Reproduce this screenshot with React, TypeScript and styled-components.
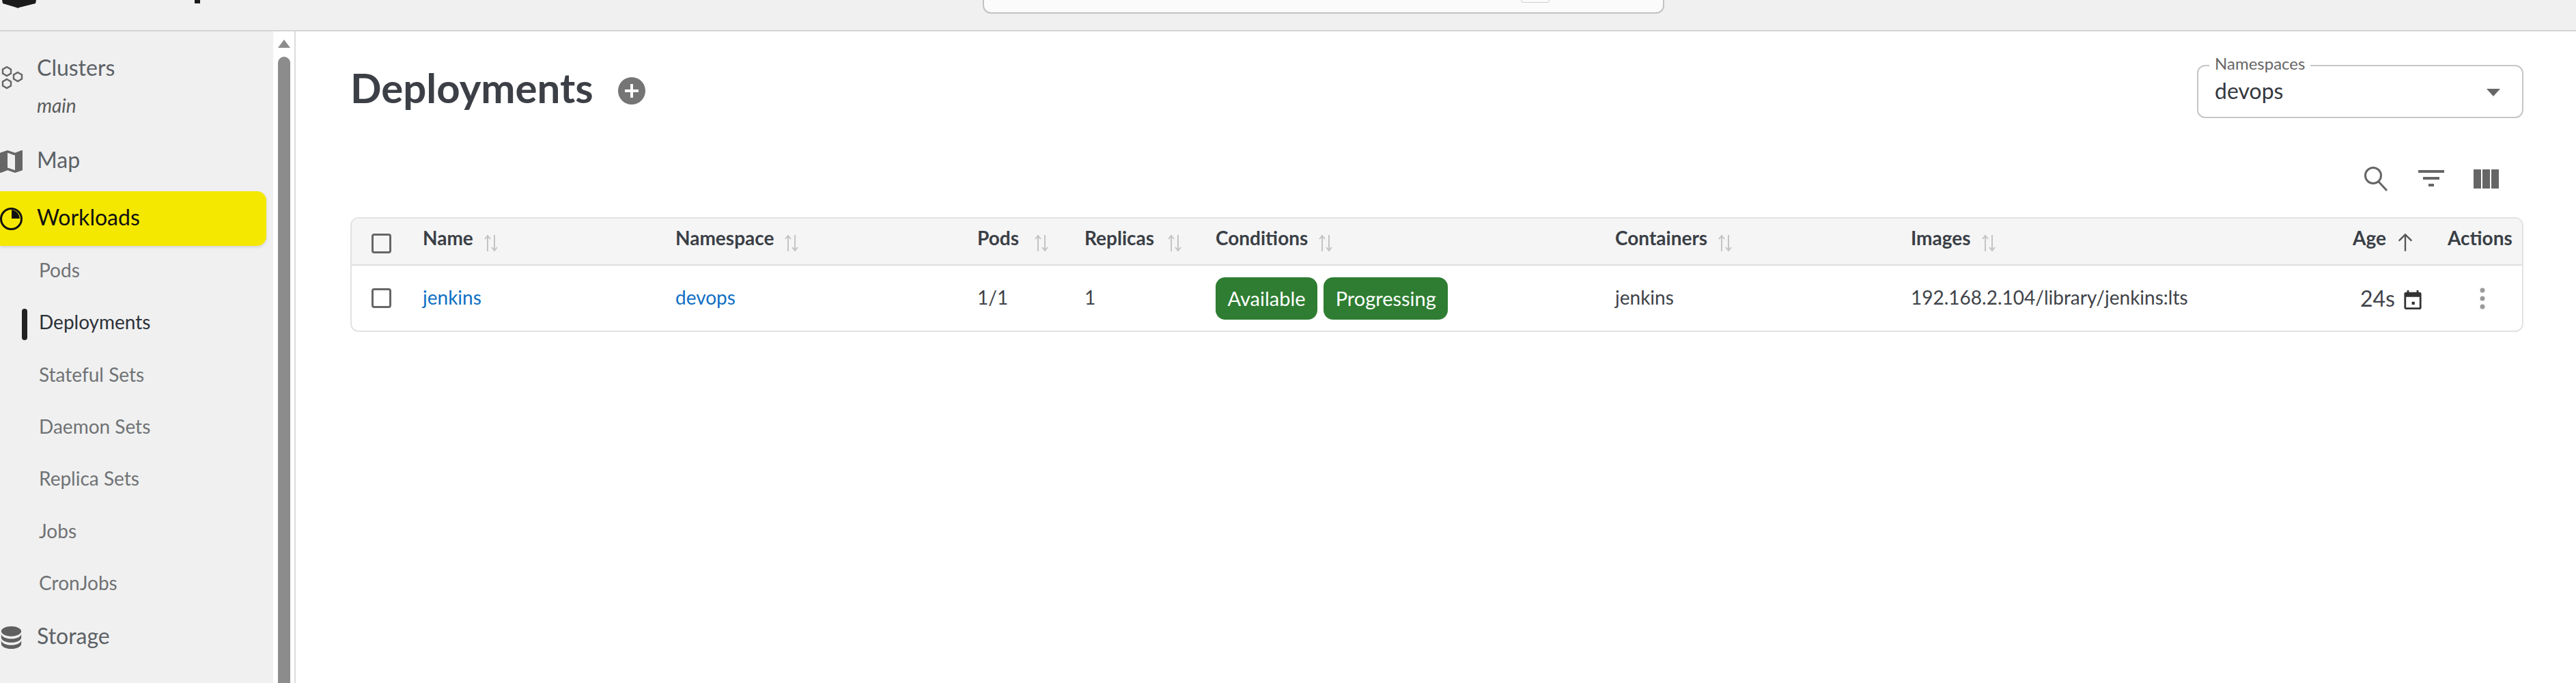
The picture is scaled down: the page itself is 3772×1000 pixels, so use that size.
import React from "react";
import styled, { createGlobalStyle } from "styled-components";

const GlobalStyle = createGlobalStyle`
  html, body {
    margin: 0;
    padding: 0;
    background: #fff;
  }
  body {
    font-family: "Lato", "Liberation Sans", sans-serif;
    overflow: hidden;
  }
`;

const Page = styled.div`
  width: 3772px;
  height: 1000px;
  display: flex;
  flex-direction: column;
  overflow: hidden;
`;

const TopBar = styled.header`
  height: 46px;
  flex: none;
  background: #f0f0f0;
  border-bottom: 2px solid #d4d4d4;
  box-sizing: border-box;
  display: flex;
  position: relative;
`;

const LogoClip = styled.svg`
  width: 320px;
  height: 16px;
  margin-right: 1119px;
  flex: none;
`;

const SearchBox = styled.div`
  width: 998px;
  height: 20px;
  box-sizing: border-box;
  background: #fbfbfb;
  border: 2px solid #c2c2c2;
  border-top: none;
  border-radius: 0 0 12px 12px;
  display: flex;
  justify-content: flex-end;
  padding-right: 166px;
`;

const KeyHint = styled.div`
  width: 42px;
  height: 4px;
  box-sizing: border-box;
  border: 1px solid #cfcfcf;
  border-top: none;
  border-radius: 0 0 4px 4px;
`;

const Body = styled.div`
  flex: 1;
  display: flex;
  min-height: 0;
`;

const Sidebar = styled.aside`
  width: 400px;
  flex: none;
  background: #f0f0f0;
  overflow: hidden;
`;

const ScrollTrack = styled.div`
  width: 33px;
  flex: none;
  box-sizing: border-box;
  background: #fff;
  border-right: 2px solid #dcdcdc;
  padding: 12px 7px 0 7px;
  display: flex;
  flex-direction: column;
  gap: 13px;
`;

const ScrollArrow = styled.div`
  width: 0;
  height: 0;
  border-left: 9px solid transparent;
  border-right: 9px solid transparent;
  border-bottom: 12px solid #8c8c8c;
`;

const ScrollThumb = styled.div`
  flex: 1;
  width: 18px;
  background: #8c8c8c;
  border-radius: 9px 9px 0 0;
`;

const ClusterItem = styled.div`
  height: 130px;
  margin-top: 14px;
  padding: 19px 0 0 54px;
  box-sizing: border-box;
  margin-bottom: 5px;
  position: relative;
`;

const ClusterName = styled.div`
  font-size: 32px;
  line-height: 40px;
  color: #5c6166;
`;

const ClusterSub = styled.div`
  font-size: 28px;
  line-height: 34px;
  margin-top: 18px;
  font-style: italic;
  color: #5c5c5c;
`;

const NavItem = styled.div<{ $active?: boolean }>`
  height: 80px;
  width: 390px;
  box-sizing: border-box;
  display: flex;
  align-items: center;
  gap: 21px;
  margin-bottom: 5px;
  font-size: 32px;
  padding-bottom: ${({ $active }) => ($active ? "6px" : "4px")};
  color: ${({ $active }) => ($active ? "#111" : "#5c6166")};
  background: ${({ $active }) => ($active ? "#f5e800" : "transparent")};
  border-radius: ${({ $active }) => ($active ? "0 14px 14px 0" : "0")};
  box-shadow: ${({ $active }) =>
    $active ? "0 2px 4px rgba(0,0,0,0.12)" : "none"};
`;

const NavIcon = styled.svg`
  width: 33px;
  height: 33px;
  flex: none;
  position: relative;
  top: 3px;
`;

const ClusterIcon = styled(NavIcon)`
  position: absolute;
  left: 0;
  top: 37px;
  width: 34px;
  height: 34px;
`;

const SubList = styled.div`
  height: 532px;
  margin-top: -5px;
`;

const SubItem = styled.div<{ $active?: boolean }>`
  height: 76.33px;
  box-sizing: border-box;
  padding-bottom: 6px;
  display: flex;
  align-items: center;
  position: relative;
  padding-left: 57px;
  font-size: 28px;
  color: ${({ $active }) => ($active ? "#2c3138" : "#6f7275")};
`;

const ActiveMark = styled.span`
  position: absolute;
  left: 32px;
  top: 16px;
  width: 8px;
  height: 46px;
  border-radius: 4px;
  background: #222;
`;

const Main = styled.main`
  flex: 1;
  min-width: 0;
  padding: 49px 77px 0 80px;
`;

const TitleRow = styled.div`
  display: flex;
  justify-content: space-between;
  align-items: flex-start;
`;

const TitleGroup = styled.div`
  display: flex;
  align-items: center;
  gap: 32px;
  height: 66px;
`;

const Title = styled.h1`
  margin: 0;
  font-size: 60px;
  line-height: 66px;
  font-weight: 700;
  color: #3c4046;
`;

const AddIcon = styled.svg`
  width: 48px;
  height: 48px;
  position: relative;
  top: 5px;
`;

const SelectBox = styled.div`
  width: 478px;
  height: 78px;
  box-sizing: border-box;
  border: 2px solid #c6c6c6;
  border-radius: 12px;
  position: relative;
  padding: 0 32px 4px 24px;
  display: flex;
  align-items: center;
  justify-content: space-between;
  font-size: 32px;
  color: #34383e;
`;

const SelectLabel = styled.span`
  position: absolute;
  left: 16px;
  top: -18px;
  padding: 0 8px;
  background: #fff;
  font-size: 24px;
  line-height: 28px;
  color: #666;
`;

const SelectArrow = styled.span`
  width: 0;
  height: 0;
  border-left: 10px solid transparent;
  border-right: 10px solid transparent;
  border-top: 11px solid #666;
  margin-top: 6px;
`;

const Toolbar = styled.div`
  display: flex;
  justify-content: flex-end;
  align-items: center;
  height: 46px;
  margin: 66px 0 33px;
  padding-right: 34px;
  gap: 41px;
`;

const ToolIcon = styled.svg`
  width: 40px;
  height: 40px;
  flex: none;
`;

const Table = styled.div`
  border: 2px solid #e2e2e2;
  border-radius: 12px;
  overflow: hidden;
`;

const columns = "104px 370px 442px 157px 192px 585px 433px 647px 139px 1fr";

const HeadRow = styled.div`
  display: grid;
  grid-template-columns: ${columns};
  height: 69px;
  background: #f5f5f5;
  border-bottom: 2px solid #dedede;
  box-sizing: border-box;
  align-items: start;
  font-size: 28px;
  font-weight: 700;
  color: #3a3f46;
`;

const BodyRow = styled.div`
  display: grid;
  grid-template-columns: ${columns};
  height: 95px;
  align-items: center;
  font-size: 28px;
  color: #3f4349;
`;

const CheckCell = styled.div<{ $head?: boolean }>`
  padding-left: 29px;
  padding-top: ${({ $head }) => ($head ? "22px" : "0")};
`;

const Check = styled.span`
  display: block;
  width: 29px;
  height: 29px;
  box-sizing: border-box;
  border: 3px solid #666;
  border-radius: 4px;
`;

const HeadCell = styled.div`
  display: flex;
  align-items: flex-start;
  gap: 14px;
  padding-top: 10px;
  line-height: 36px;
`;

const SortIcon = styled.svg<{ $gap?: number }>`
  width: 24px;
  height: 28px;
  flex: none;
  margin-top: 12px;
  margin-left: ${({ $gap }) => $gap ?? 0}px;
`;

const AgeSortIcon = styled.svg`
  width: 28px;
  height: 28px;
  flex: none;
  margin-top: 11px;
`;

const Cell = styled.div`
  line-height: 36px;
  padding-bottom: 4px;
`;

const LinkText = styled.span`
  color: #0f6fc4;
`;

const Chips = styled.div`
  display: flex;
  gap: 9px;
`;

const Chip = styled.span`
  height: 62px;
  box-sizing: border-box;
  padding: 0 17.5px;
  display: flex;
  align-items: center;
  background: #2e7d32;
  color: #fff;
  border-radius: 14px;
  font-size: 29px;
`;

const AgeCell = styled.div`
  display: flex;
  align-items: center;
  gap: 12px;
  padding-left: 11px;
  font-size: 32px;
`;

const CalendarIcon = styled.svg`
  width: 28px;
  height: 28px;
  flex: none;
  margin-top: 4px;
`;

const DotsIcon = styled.svg`
  width: 12px;
  height: 34px;
  margin-left: 45px;
  display: block;
`;

const SortArrows: React.FC<{ gap?: number }> = ({ gap }) => (
  <SortIcon
    $gap={gap}
    viewBox="0 0 24 28"
    fill="none"
    stroke="#c4c4c4"
    strokeWidth="2"
  >
    <path d="M7 26V3M3 8l4-5 4 5" />
    <path d="M17 2v23M13 20l4 5 4-5" />
  </SortIcon>
);

const heads = [
  { label: "Name" },
  { label: "Namespace" },
  { label: "Pods", gap: 7 },
  { label: "Replicas", gap: 4 },
  { label: "Conditions" },
  { label: "Containers" },
  { label: "Images" },
];

const subItems = [
  "Pods",
  "Deployments",
  "Stateful Sets",
  "Daemon Sets",
  "Replica Sets",
  "Jobs",
  "CronJobs",
];

const App: React.FC = () => (
  <Page>
    <GlobalStyle />
    <TopBar>
      <LogoClip viewBox="0 0 320 16">
        <path d="M3 0h50l-1 5-24 6-2 1-2-1-20-6z" fill="#1a1a1a" />
        <rect x="285" y="0" width="8" height="5" fill="#1a1a1a" />
      </LogoClip>
      <SearchBox>
        <KeyHint />
      </SearchBox>
    </TopBar>
    <Body>
      <Sidebar>
        <ClusterItem>
          <ClusterIcon viewBox="0 0 34 34" fill="none" stroke="#666" strokeWidth="2.4">
            <path d="M10 1l6 3.5v6L10 14l-6-3.5v-6z" />
            <path d="M26 9l6 3.5v6L26 22l-6-3.5v-6z" />
            <path d="M10 19l6 3.5v6L10 32l-6-3.5v-6z" />
          </ClusterIcon>
          <ClusterName>Clusters</ClusterName>
          <ClusterSub>main</ClusterSub>
        </ClusterItem>
        <NavItem>
          <NavIcon viewBox="3 3 18 18" fill="#666">
            <path d="M15 19L9 16.89V5l6 2.11M20.5 3h-.16L15 5.1 9 3 3.36 4.9c-.21.07-.36.25-.36.48V20.5a.5.5 0 0 0 .66.47L9 18.9l6 2.1 5.64-1.9c.21-.1.36-.25.36-.48V3.5a.5.5 0 0 0-.5-.5z" />
          </NavIcon>
          Map
        </NavItem>
        <NavItem $active>
          <NavIcon viewBox="0 0 33 33" fill="none" stroke="#111" strokeWidth="3">
            <circle cx="16.5" cy="16.5" r="15" />
            <path d="M17 3a14 14 0 0 1 12 13H17z" fill="#111" stroke="none" />
          </NavIcon>
          Workloads
        </NavItem>
        <SubList>
          {subItems.map((item) => (
            <SubItem key={item} $active={item === "Deployments"}>
              {item === "Deployments" && <ActiveMark />}
              {item}
            </SubItem>
          ))}
        </SubList>
        <NavItem>
          <NavIcon viewBox="4 3 16 18" fill="#5f5f5f">
            <path d="M12 3C7.58 3 4 4.79 4 7s3.58 4 8 4 8-1.79 8-4-3.58-4-8-4M4 9v3c0 2.21 3.58 4 8 4s8-1.79 8-4V9c0 2.21-3.58 4-8 4s-8-1.79-8-4m0 5v3c0 2.21 3.58 4 8 4s8-1.79 8-4v-3c0 2.21-3.58 4-8 4s-8-1.79-8-4z" />
          </NavIcon>
          Storage
        </NavItem>
      </Sidebar>
      <ScrollTrack>
        <ScrollArrow />
        <ScrollThumb />
      </ScrollTrack>
      <Main>
        <TitleRow>
          <TitleGroup>
            <Title>Deployments</Title>
            <AddIcon viewBox="0 0 24 24" fill="#757575">
              <path d="M17 13h-4v4h-2v-4H7v-2h4V7h2v4h4M12 2a10 10 0 1 0 0 20 10 10 0 0 0 0-20z" />
            </AddIcon>
          </TitleGroup>
          <SelectBox>
            <SelectLabel>Namespaces</SelectLabel>
            devops
            <SelectArrow />
          </SelectBox>
        </TitleRow>
        <Toolbar>
          <ToolIcon viewBox="0 0 40 40" fill="none" stroke="#666" strokeWidth="3">
            <circle cx="16" cy="15" r="11.5" />
            <path d="M24 24l12 13" />
          </ToolIcon>
          <ToolIcon viewBox="0 0 40 40" fill="#666">
            <rect x="1" y="7" width="38" height="4" />
            <rect x="8" y="17" width="24" height="4" />
            <rect x="16" y="27" width="8" height="4" />
          </ToolIcon>
          <ToolIcon viewBox="0 0 40 40" fill="#666">
            <rect x="1" y="6" width="11" height="28" />
            <rect x="14" y="6" width="11" height="28" />
            <rect x="27" y="6" width="11" height="28" />
          </ToolIcon>
        </Toolbar>
        <Table>
          <HeadRow>
            <CheckCell $head>
              <Check />
            </CheckCell>
            {heads.map((head) => (
              <HeadCell key={head.label}>
                {head.label}
                <SortArrows gap={head.gap} />
              </HeadCell>
            ))}
            <HeadCell>
              Age
              <AgeSortIcon viewBox="0 0 24 24" fill="none" stroke="#555" strokeWidth="2">
                <path d="M12 23V2M4 10l8-8 8 8" />
              </AgeSortIcon>
            </HeadCell>
            <HeadCell>Actions</HeadCell>
          </HeadRow>
          <BodyRow>
            <CheckCell>
              <Check />
            </CheckCell>
            <Cell>
              <LinkText>jenkins</LinkText>
            </Cell>
            <Cell>
              <LinkText>devops</LinkText>
            </Cell>
            <Cell>1/1</Cell>
            <Cell>1</Cell>
            <Chips>
              <Chip>Available</Chip>
              <Chip>Progressing</Chip>
            </Chips>
            <Cell>jenkins</Cell>
            <Cell>192.168.2.104/library/jenkins:lts</Cell>
            <AgeCell>
              24s
              <CalendarIcon viewBox="3 1 18 20" fill="#333">
                <path d="M19 3h-1V1h-2v2H8V1H6v2H5a2 2 0 0 0-2 2v14c0 1.1.9 2 2 2h14a2 2 0 0 0 2-2V5a2 2 0 0 0-2-2zm0 16H5V8h14zM11 13h3v3h-3z" />
              </CalendarIcon>
            </AgeCell>
            <div>
              <DotsIcon viewBox="0 0 12 34" fill="#9a9a9a">
                <circle cx="6" cy="5" r="3.5" />
                <circle cx="6" cy="17" r="3.5" />
                <circle cx="6" cy="29" r="3.5" />
              </DotsIcon>
            </div>
          </BodyRow>
        </Table>
      </Main>
    </Body>
  </Page>
);

export default App;
